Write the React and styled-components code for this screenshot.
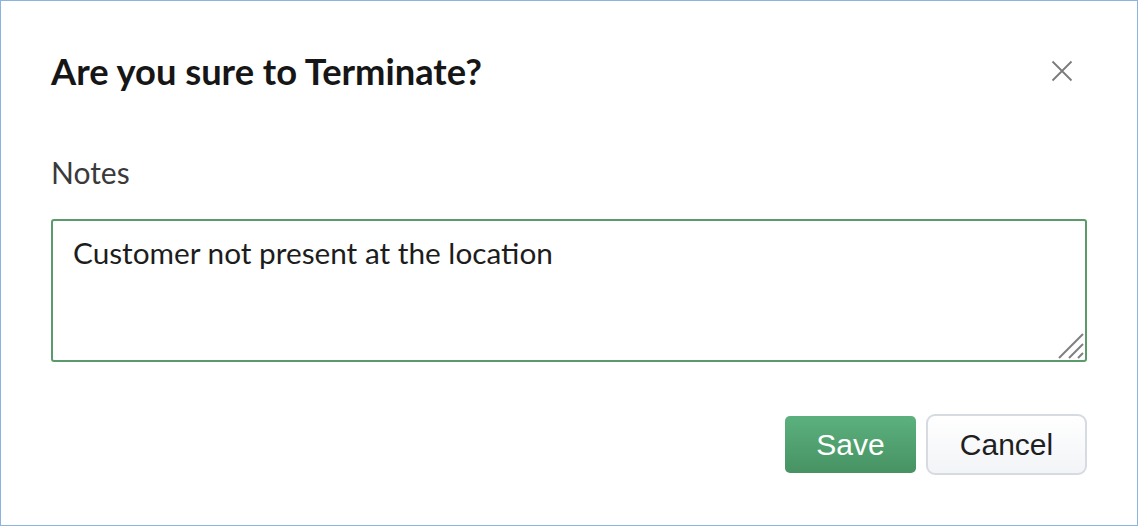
import React from "react";
import styled, { createGlobalStyle } from "styled-components";

const Global = createGlobalStyle`
  html, body { margin: 0; padding: 0; background: #fff; }
  * { box-sizing: border-box; }
`;

const Frame = styled.div`
  width: 1138px;
  height: 526px;
  border: 1px solid #8db4de;
  background: #fff;
  padding: 49px 50px 0 50px;
  display: flex;
  flex-direction: column;
  font-family: Lato, "Noto Sans", sans-serif;
`;

const Header = styled.div`
  display: flex;
  align-items: center;
  justify-content: space-between;
  height: 42px;
`;

const Title = styled.h2`
  margin: 0;
  font-size: 36.3px;
  line-height: 42px;
  font-weight: 700;
  color: #161616;
`;

const CloseButton = styled.button`
  border: none;
  background: none;
  padding: 0;
  width: 24px;
  height: 24px;
  margin-right: 13px;
  display: flex;
  align-items: center;
  justify-content: center;
  cursor: pointer;
`;

const Label = styled.label`
  margin-top: 62px;
  font-size: 30px;
  line-height: 36px;
  color: #3a3a3a;
`;

const AreaWrap = styled.div`
  position: relative;
  margin-top: 29px;
  width: 1036px;
  height: 143px;
`;

const NotesArea = styled.textarea`
  display: block;
  width: 100%;
  height: 100%;
  border: 2px solid #5b9a6a;
  border-radius: 3px;
  padding: 14px 20px;
  font-family: Lato, "Noto Sans", sans-serif;
  font-size: 29.75px;
  color: #1d1d1d;
  outline: none;
  resize: none;
`;

const Grip = styled.svg`
  position: absolute;
  right: 3px;
  bottom: 3px;
  pointer-events: none;
`;

const Actions = styled.div`
  margin-top: 52px;
  display: flex;
  justify-content: flex-end;
  align-items: center;
  gap: 10px;
`;

const Btn = styled.button`
  font-family: "Liberation Sans", Arial, sans-serif;
  font-size: 30px;
  cursor: pointer;
  ${(p) =>
    p.$primary
      ? `
    width: 131px;
    height: 57px;
    border: none;
    border-radius: 5px;
    color: #fff;
    background: linear-gradient(#5bb17e, #479262);
  `
      : `
    width: 161px;
    height: 61px;
    border: 2px solid #d6dbe2;
    border-radius: 9px;
    color: #1f1f1f;
    background: linear-gradient(#ffffff, #f2f4f7);
  `}
`;

export default function App() {
  return (
    <>
      <Global />
      <Frame>
        <Header>
          <Title>Are you sure to Terminate?</Title>
          <CloseButton aria-label="Close">
            <svg width="24" height="24" viewBox="0 0 24 24">
              <path d="M2.5 2.5 L21.5 21.5 M21.5 2.5 L2.5 21.5" stroke="#7a7a7a" strokeWidth="1.8" fill="none" />
            </svg>
          </CloseButton>
        </Header>
        <Label>Notes</Label>
        <AreaWrap>
          <NotesArea defaultValue="Customer not present at the location" />
          <Grip width="28" height="28" viewBox="0 0 28 28">
            <path d="M3 27 L27 3 M13 27 L27 13 M22 27 L27 22" stroke="#808080" strokeWidth="2" fill="none" />
          </Grip>
        </AreaWrap>
        <Actions>
          <Btn $primary>Save</Btn>
          <Btn>Cancel</Btn>
        </Actions>
      </Frame>
    </>
  );
}
